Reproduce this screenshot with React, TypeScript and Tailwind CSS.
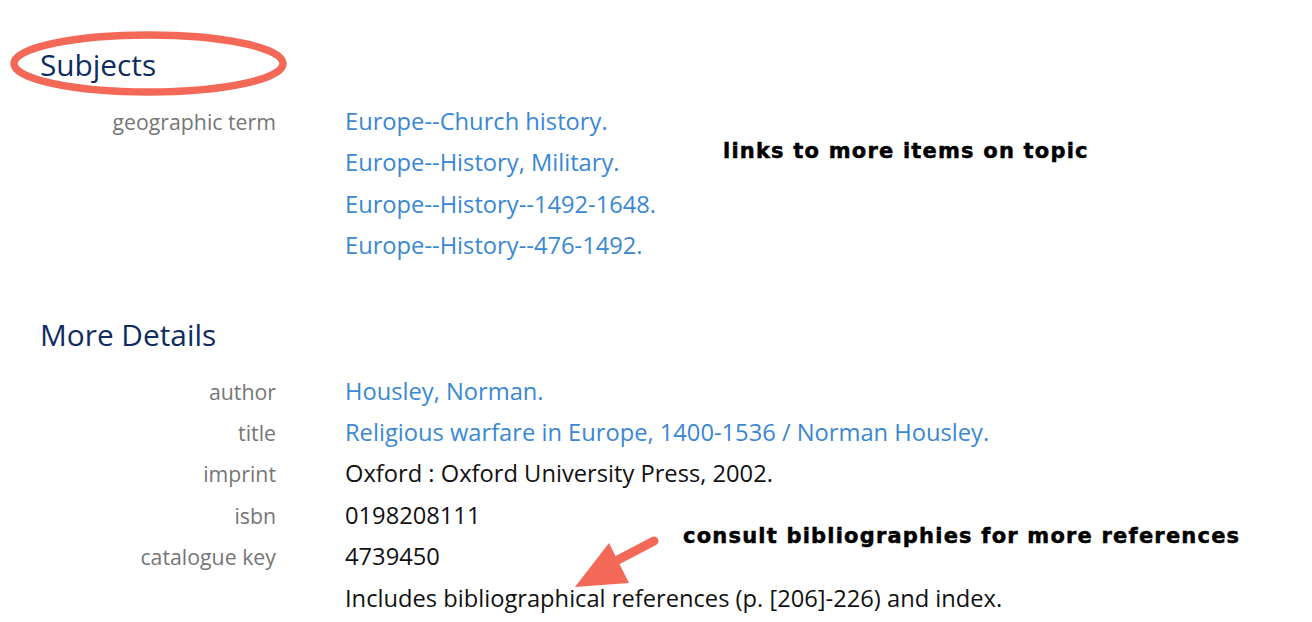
import React from 'react';

const subjects = [
    'Europe--Church history.',
    'Europe--History, Military.',
    'Europe--History--1492-1648.',
    'Europe--History--476-1492.',
];

type Detail = { label: string; value: string; link?: boolean };

const details: Detail[] = [
    { label: 'author', value: 'Housley, Norman.', link: true },
    { label: 'title', value: 'Religious warfare in Europe, 1400-1536 / Norman Housley.', link: true },
    { label: 'imprint', value: 'Oxford : Oxford University Press, 2002.' },
    { label: 'isbn', value: '0198208111' },
    { label: 'catalogue key', value: '4739450' },
    { label: '', value: 'Includes bibliographical references (p. [206]-226) and index.' },
];

function Row({ label, value, link }: Detail) {
    return (
        <>
            <div className="text-right text-[21.3px] leading-[41.4px] text-[#767676]">{label}</div>
            <div className={`text-[23.7px] leading-[41.4px] ${link ? 'text-[#3a87d3]' : 'text-[#111]'}`}>
                {value}
            </div>
        </>
    );
}

export default function App() {
    return (
        <div className="relative w-[1312px] h-[622px] overflow-hidden bg-white font-['Open_Sans',sans-serif]">
            <div className="px-10 pt-[43px]">
                <h2 className="text-[29.8px] leading-[44px] text-[#0e2c60]">Subjects</h2>
                <div className="grid grid-cols-[236px_1fr] gap-x-[69px] mt-[14px]">
                    <div className="text-right text-[21.3px] leading-[41.4px] text-[#767676]">geographic term</div>
                    <div className="flex flex-col">
                        {subjects.map((s) => (
                            <a key={s} className="text-[23.7px] leading-[41.4px] text-[#3a87d3]">{s}</a>
                        ))}
                    </div>
                </div>

                <h2 className="mt-[46px] text-[29.8px] leading-[44px] text-[#0e2c60]">More Details</h2>
                <div className="grid grid-cols-[236px_1fr] gap-x-[69px] mt-[14px]">
                    {details.map((d, i) => (
                        <Row key={i} {...d} />
                    ))}
                </div>
            </div>

            {/* annotations */}
            <svg className="absolute inset-0 pointer-events-none" width="1312" height="622">
                <ellipse cx="148.5" cy="63.5" rx="134.5" ry="28.5" fill="none" stroke="#f46857" strokeWidth="7.5" />
                <line x1="654" y1="541" x2="612" y2="563" stroke="#f46857" strokeWidth="9" strokeLinecap="round" />
                <polygon points="609,543 575,587 629,583" fill="#f46857" />
            </svg>
            <div className="absolute left-[723px] top-[137px] font-['DejaVu_Sans',sans-serif] font-bold text-[21px] leading-[28px] tracking-[1.2px] [-webkit-text-stroke:0.5px_black] text-black">
                links to more items on topic
            </div>
            <div className="absolute left-[683px] top-[522px] font-['DejaVu_Sans',sans-serif] font-bold text-[21px] leading-[28px] tracking-[1.2px] [-webkit-text-stroke:0.5px_black] text-black">
                consult bibliographies for more references
            </div>
        </div>
    );
}
